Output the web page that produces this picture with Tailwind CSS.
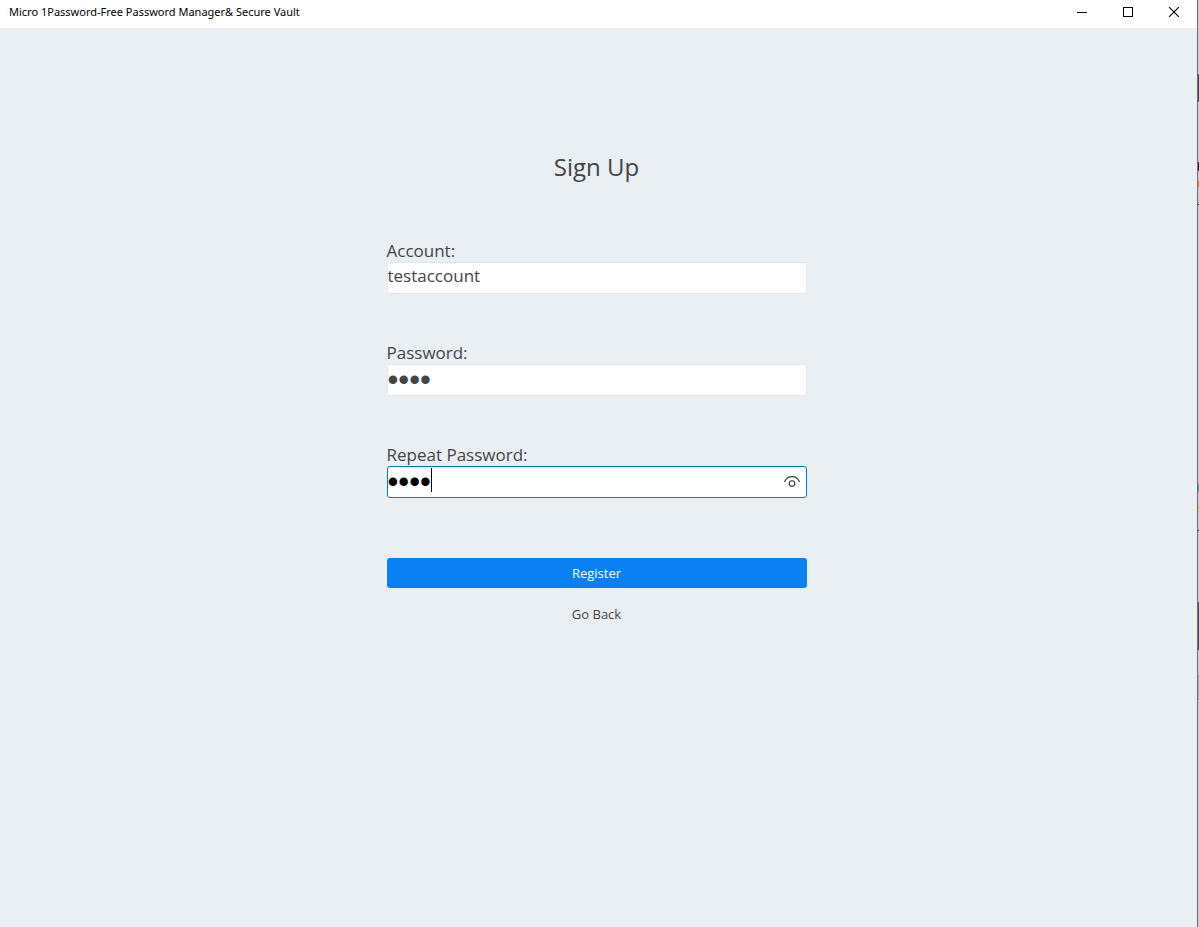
<!DOCTYPE html>
<html lang="en">
<head>
    <meta charset="UTF-8">
    <meta name="viewport" content="width=device-width, initial-scale=1.0">
    <title>Micro 1Password-Free Password Manager& Secure Vault</title>
    <script src="https://cdn.jsdelivr.net/npm/@tailwindcss/browser@4"></script>
</head>
<body class="flex min-h-screen overflow-x-hidden bg-[#eaeff4] font-['Open_Sans','Noto_Sans',sans-serif] text-[#444444]">

    <div class="flex min-w-0 flex-1 flex-col">
      <!--title bar-->
      <header class="flex h-7 items-start justify-between bg-white text-black">
        <h1 class="pl-[9px] font-['Noto_Sans',sans-serif] text-[11px] leading-6 whitespace-nowrap">Micro 1Password-Free Password Manager&amp; Secure Vault</h1>
        <div class="flex h-6">
          <button type="button" aria-label="Minimize" class="flex w-[46px] items-center justify-center">
            <svg class="size-[10px]" viewBox="0 0 10 10" shape-rendering="crispEdges"><path d="M0 5h10v1H0z"/></svg>
          </button>
          <button type="button" aria-label="Maximize" class="flex w-[46px] items-center justify-center">
            <svg class="size-[10px]" viewBox="0 0 10 10" fill="none" stroke="currentColor" shape-rendering="crispEdges"><path d="M.5 .5h9v9h-9z"/></svg>
          </button>
          <button type="button" aria-label="Close" class="flex w-[46px] items-center justify-center">
            <svg class="size-[10px]" viewBox="0 0 10 10" stroke="currentColor" stroke-width="1.1"><path d="M0 0l10 10M10 0L0 10"/></svg>
          </button>
        </div>
      </header>
      <!--title bar-->

      <!--sign up-->
      <main class="flex flex-1 justify-center pt-[121px] pr-5 pl-4">
        <form class="flex w-full max-w-[420px] flex-col">
          <h2 class="text-center text-[24px] leading-9">Sign Up</h2>

          <div class="mt-[55px] flex flex-col">
            <label for="account" class="text-[17px] leading-[22px]">Account:</label>
            <input id="account" type="text" value="testaccount" class="h-8 w-full rounded-[3px] border border-[#e3e5e8] bg-white pb-[6px] text-[17px] outline-none">
          </div>

          <div class="mt-12 flex flex-col">
            <label for="password" class="text-[17px] leading-[22px]">Password:</label>
            <input id="password" type="password" value="test" class="h-8 w-full rounded-[3px] border border-[#e3e5e8] bg-white font-['Liberation_Sans',sans-serif] text-[31px] leading-[30px] outline-none">
          </div>

          <div class="mt-12 flex flex-col">
            <label for="repeat" class="text-[17px] leading-[22px]">Repeat Password:</label>
            <div class="relative">
              <input id="repeat" type="password" value="test" class="block h-8 w-full rounded-[3px] border border-[#0078d7] bg-white font-['Liberation_Sans',sans-serif] text-[31px] leading-[30px] text-black caret-transparent outline-none">
              <span class="absolute top-[2px] left-11 h-6 w-px bg-black"></span>
              <button type="button" aria-label="Show password" class="absolute top-0 right-0 flex h-8 w-[30px] items-center justify-center">
                <svg class="h-3 w-4" viewBox="0 0 16 12" fill="none" stroke="#333333" stroke-width="1.1"><path d="M.5 6C1.8 2.500 4.600 .6 8 .6s6.200 1.900 7.500 5.400"/><circle cx="8" cy="7.500" r="2.800"/></svg>
              </button>
            </div>
          </div>

          <button type="submit" class="mt-[60px] h-[30px] rounded-[3px] bg-[#0b80f5] pt-px text-[13px] text-white">Register</button>
          <a href="#" class="mt-4 self-center text-[13px] leading-5">Go Back</a>
        </form>
      </main>
      <!--sign up-->
    </div>

    <!--window edge, with a sliver of what is behind it-->
    <div class="flex w-[2px] shrink-0 flex-col border-l border-[#6d7075] bg-[#c9cbce]">
      <div class="mt-[74px] h-7 bg-[#2f4562]"></div>
      <div class="mt-[60px] h-[9px] bg-[#3a1a3c]"></div>
      <div class="mt-[10px] h-[6px] bg-[#c98a4a]"></div>
      <div class="mt-[17px] h-px bg-black"></div>
      <div class="mt-[279px] h-[8px] bg-[#4a93a0]"></div>
      <div class="mt-[14px] h-[3px] bg-[#c9b45a]"></div>
      <div class="mt-[21px] h-px bg-black"></div>
      <div class="mt-[71px] h-12 bg-[#3a4d6b]"></div>
      <div class="mt-[25px] h-[25px] bg-[#a3a5ad]"></div>
    </div>
</body>
</html>
